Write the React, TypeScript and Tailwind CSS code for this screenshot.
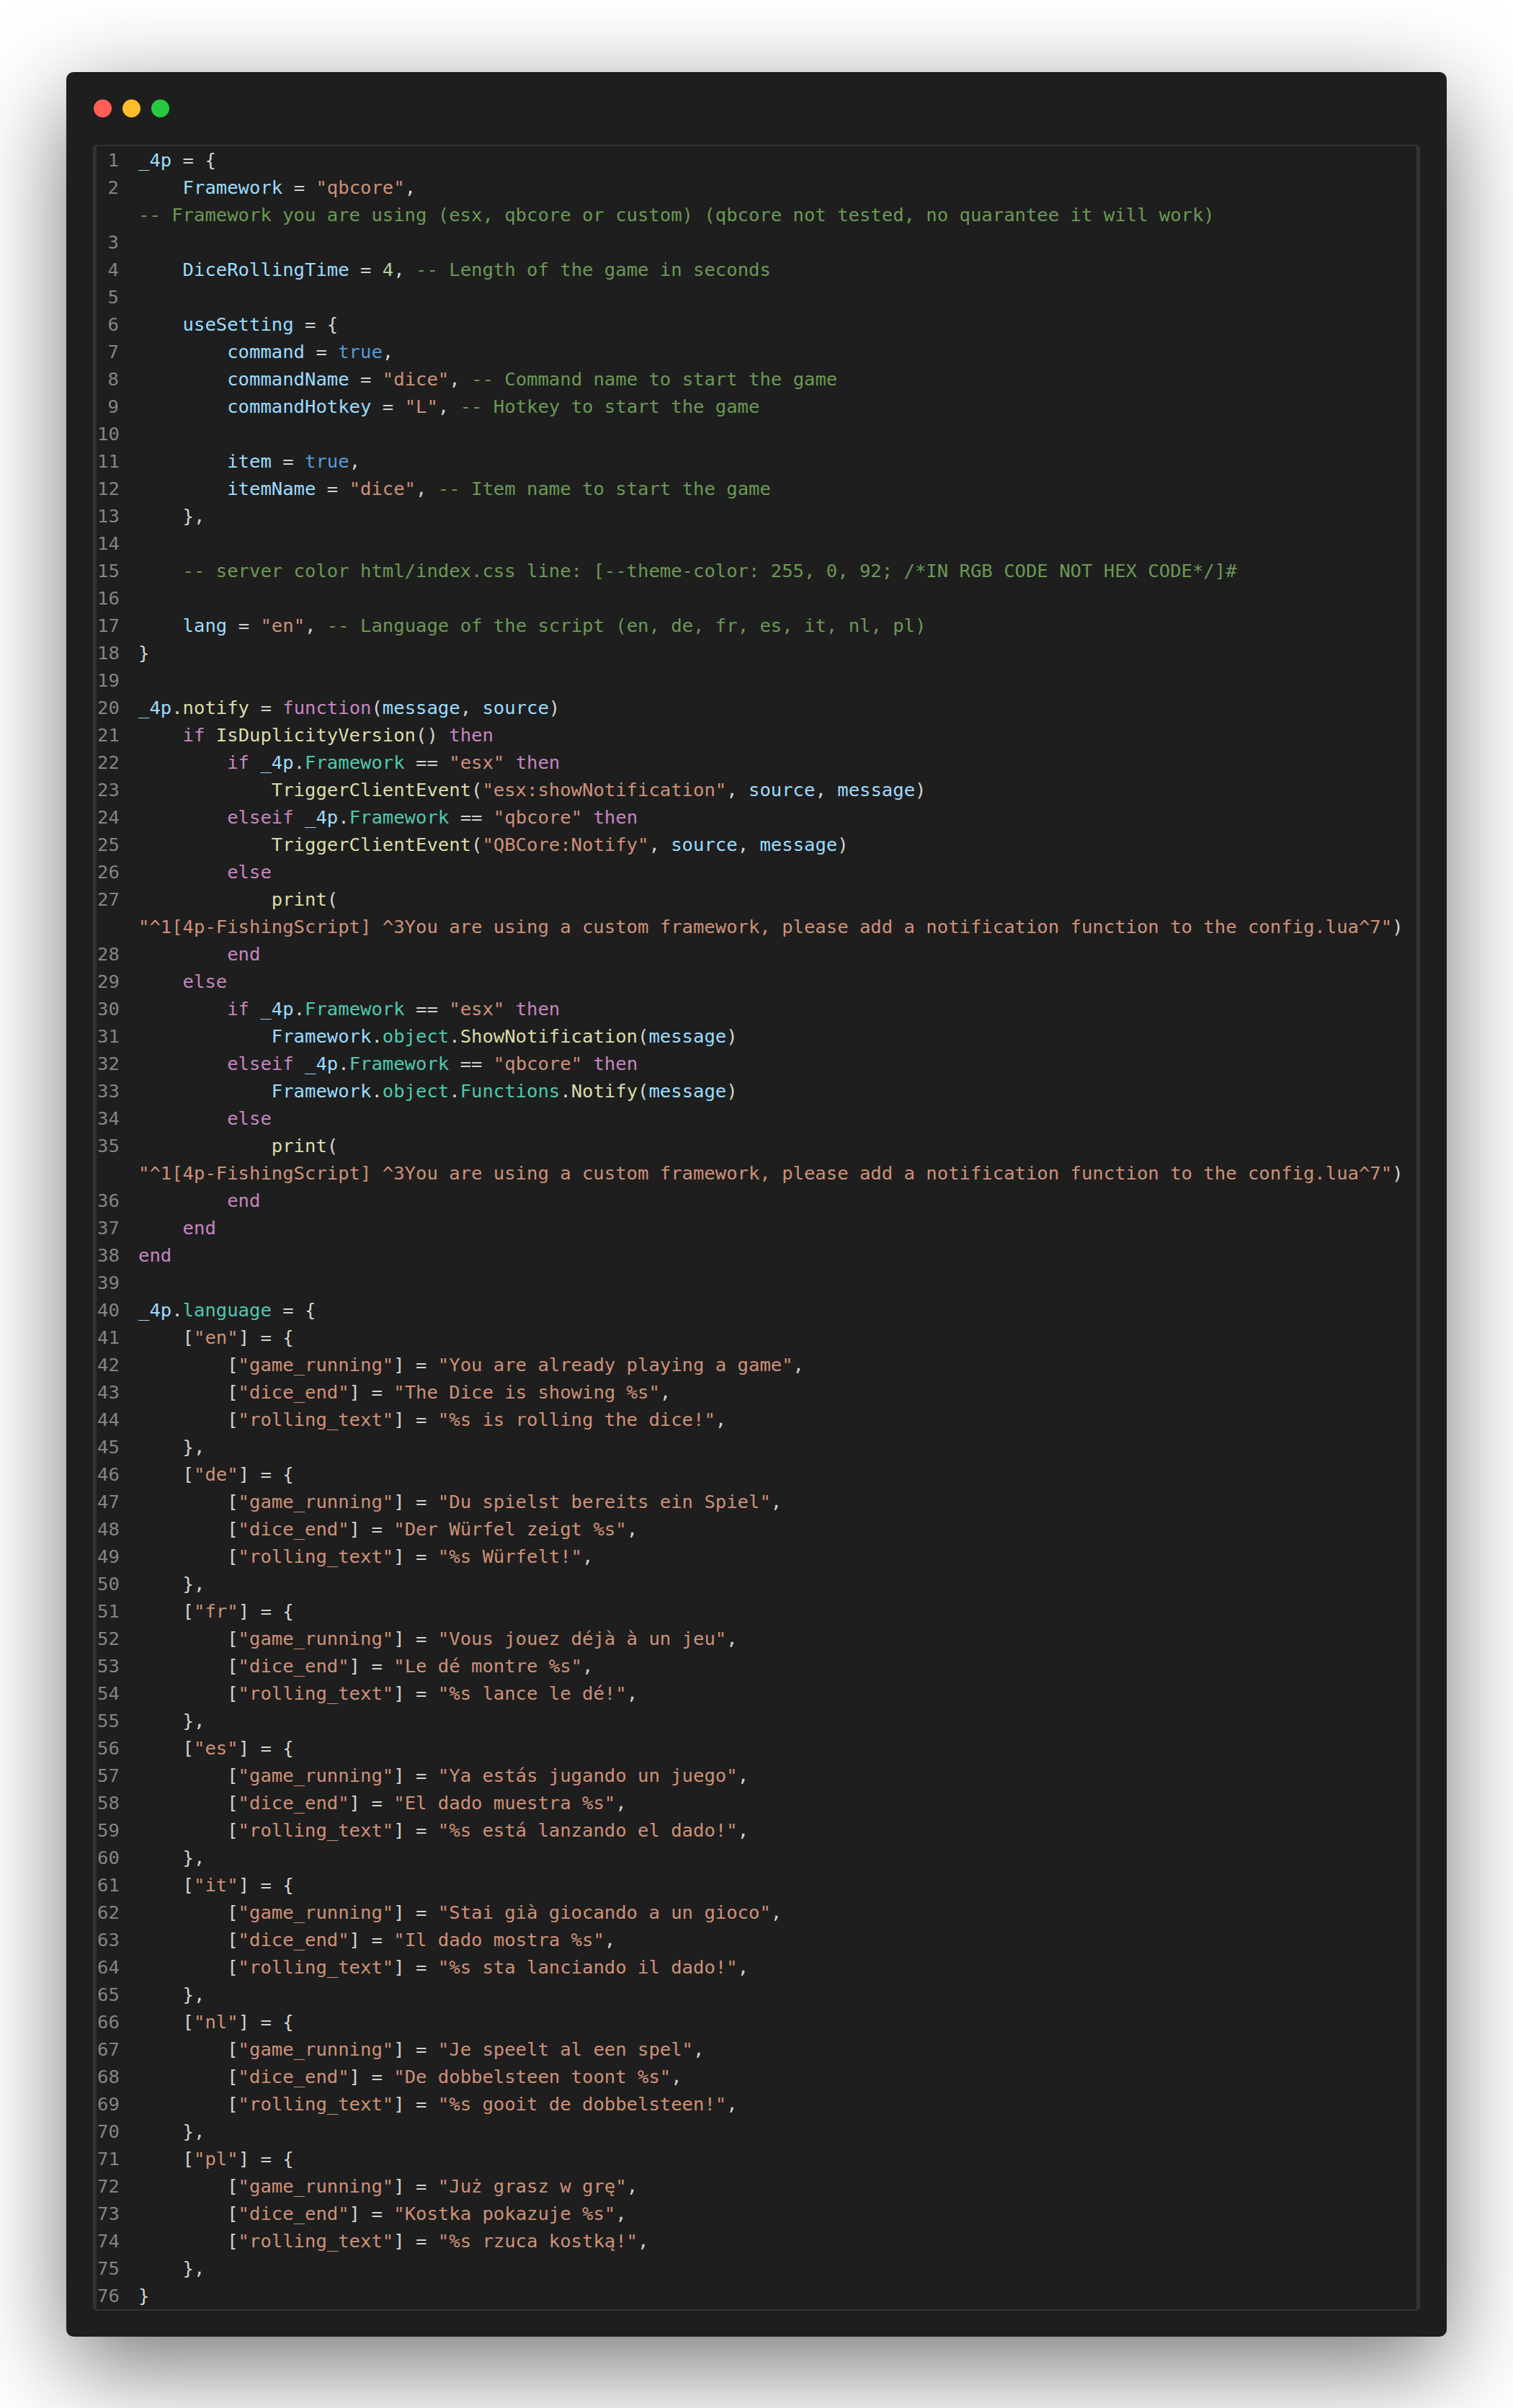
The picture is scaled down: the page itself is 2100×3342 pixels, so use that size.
const SOURCE: [string, string][] = [
  ["1", `_4p = {`],
  ["2", `    Framework = "qbcore",`],
  ["", `-- Framework you are using (esx, qbcore or custom) (qbcore not tested, no quarantee it will work)`],
  ["3", ``],
  ["4", `    DiceRollingTime = 4, -- Length of the game in seconds`],
  ["5", ``],
  ["6", `    useSetting = {`],
  ["7", `        command = true,`],
  ["8", `        commandName = "dice", -- Command name to start the game`],
  ["9", `        commandHotkey = "L", -- Hotkey to start the game`],
  ["10", ``],
  ["11", `        item = true,`],
  ["12", `        itemName = "dice", -- Item name to start the game`],
  ["13", `    },`],
  ["14", ``],
  ["15", `    -- server color html/index.css line: [--theme-color: 255, 0, 92; /*IN RGB CODE NOT HEX CODE*/]#`],
  ["16", ``],
  ["17", `    lang = "en", -- Language of the script (en, de, fr, es, it, nl, pl)`],
  ["18", `}`],
  ["19", ``],
  ["20", `_4p.notify = function(message, source)`],
  ["21", `    if IsDuplicityVersion() then`],
  ["22", `        if _4p.Framework == "esx" then`],
  ["23", `            TriggerClientEvent("esx:showNotification", source, message)`],
  ["24", `        elseif _4p.Framework == "qbcore" then`],
  ["25", `            TriggerClientEvent("QBCore:Notify", source, message)`],
  ["26", `        else`],
  ["27", `            print(`],
  ["", `"^1[4p-FishingScript] ^3You are using a custom framework, please add a notification function to the config.lua^7")`],
  ["28", `        end`],
  ["29", `    else`],
  ["30", `        if _4p.Framework == "esx" then`],
  ["31", `            Framework.object.ShowNotification(message)`],
  ["32", `        elseif _4p.Framework == "qbcore" then`],
  ["33", `            Framework.object.Functions.Notify(message)`],
  ["34", `        else`],
  ["35", `            print(`],
  ["", `"^1[4p-FishingScript] ^3You are using a custom framework, please add a notification function to the config.lua^7")`],
  ["36", `        end`],
  ["37", `    end`],
  ["38", `end`],
  ["39", ``],
  ["40", `_4p.language = {`],
  ["41", `    ["en"] = {`],
  ["42", `        ["game_running"] = "You are already playing a game",`],
  ["43", `        ["dice_end"] = "The Dice is showing %s",`],
  ["44", `        ["rolling_text"] = "%s is rolling the dice!",`],
  ["45", `    },`],
  ["46", `    ["de"] = {`],
  ["47", `        ["game_running"] = "Du spielst bereits ein Spiel",`],
  ["48", `        ["dice_end"] = "Der Würfel zeigt %s",`],
  ["49", `        ["rolling_text"] = "%s Würfelt!",`],
  ["50", `    },`],
  ["51", `    ["fr"] = {`],
  ["52", `        ["game_running"] = "Vous jouez déjà à un jeu",`],
  ["53", `        ["dice_end"] = "Le dé montre %s",`],
  ["54", `        ["rolling_text"] = "%s lance le dé!",`],
  ["55", `    },`],
  ["56", `    ["es"] = {`],
  ["57", `        ["game_running"] = "Ya estás jugando un juego",`],
  ["58", `        ["dice_end"] = "El dado muestra %s",`],
  ["59", `        ["rolling_text"] = "%s está lanzando el dado!",`],
  ["60", `    },`],
  ["61", `    ["it"] = {`],
  ["62", `        ["game_running"] = "Stai già giocando a un gioco",`],
  ["63", `        ["dice_end"] = "Il dado mostra %s",`],
  ["64", `        ["rolling_text"] = "%s sta lanciando il dado!",`],
  ["65", `    },`],
  ["66", `    ["nl"] = {`],
  ["67", `        ["game_running"] = "Je speelt al een spel",`],
  ["68", `        ["dice_end"] = "De dobbelsteen toont %s",`],
  ["69", `        ["rolling_text"] = "%s gooit de dobbelsteen!",`],
  ["70", `    },`],
  ["71", `    ["pl"] = {`],
  ["72", `        ["game_running"] = "Już grasz w grę",`],
  ["73", `        ["dice_end"] = "Kostka pokazuje %s",`],
  ["74", `        ["rolling_text"] = "%s rzuca kostką!",`],
  ["75", `    },`],
  ["76", `}`],
];

const KEYWORDS = new Set(["if", "then", "else", "elseif", "end", "function"]);

// Small Lua tokenizer, just enough for the colours in this one file.
function highlight(line: string) {
  const parts: { text: string; color: string }[] = [];
  const re = /(--.*$)|("[^"]*")|([A-Za-z_][A-Za-z0-9_]*)|(\d+)|(\s+|.)/g;
  let m: RegExpExecArray | null;
  while ((m = re.exec(line))) {
    let color = "text-[#d4d4d4]";
    if (m[1]) color = "text-[#6a9955]";
    else if (m[2]) color = "text-[#ce9178]";
    else if (m[4]) color = "text-[#b5cea8]";
    else if (m[3]) {
      const rest = line.slice(re.lastIndex);
      const afterDot = line[m.index - 1] === ".";
      if (KEYWORDS.has(m[3])) color = "text-[#c586c0]";
      else if (m[3] === "true") color = "text-[#569cd6]";
      else if (rest.startsWith("(") || m[3] === "notify") color = "text-[#dcdcaa]";
      else if (afterDot) color = "text-[#4ec9b0]";
      else color = "text-[#9cdcfe]";
    }
    parts.push({ text: m[0], color });
  }
  return parts;
}

export default function App() {
  return (
    <div className="bg-white px-[92px] pt-[100px] pb-[99px] font-['DejaVu_Sans_Mono',monospace]">
      <div className="rounded-[10px] bg-[#1e1e1e] shadow-[0_40px_136px_rgba(0,0,0,0.55)] pt-[38px] px-[37px] pb-[36px]">
        {/* Window controls */}
        <div className="flex gap-[15px] ml-[1px] mb-[38px]">
          <div className="w-[25px] h-[25px] rounded-full bg-[#ff5f56]" />
          <div className="w-[25px] h-[25px] rounded-full bg-[#ffbd2e]" />
          <div className="w-[25px] h-[25px] rounded-full bg-[#27c93f]" />
        </div>

        {/* Editor */}
        <div className="rounded-[5px] border-x-[5px] border-y-[2px] border-[#333333] h-[3006px]">
          {SOURCE.map(([num, code], i) => (
            <div key={i} className="flex h-[38px] leading-[38px] text-[25.58px] whitespace-pre">
              <div className="w-[30px] ml-[1px] shrink-0 text-right text-[#858585]">{num}</div>
              <div className="ml-[27px]">
                {highlight(code).map((part, j) => (
                  <span key={j} className={part.color}>
                    {part.text}
                  </span>
                ))}
              </div>
            </div>
          ))}
        </div>
      </div>
    </div>
  );
}
